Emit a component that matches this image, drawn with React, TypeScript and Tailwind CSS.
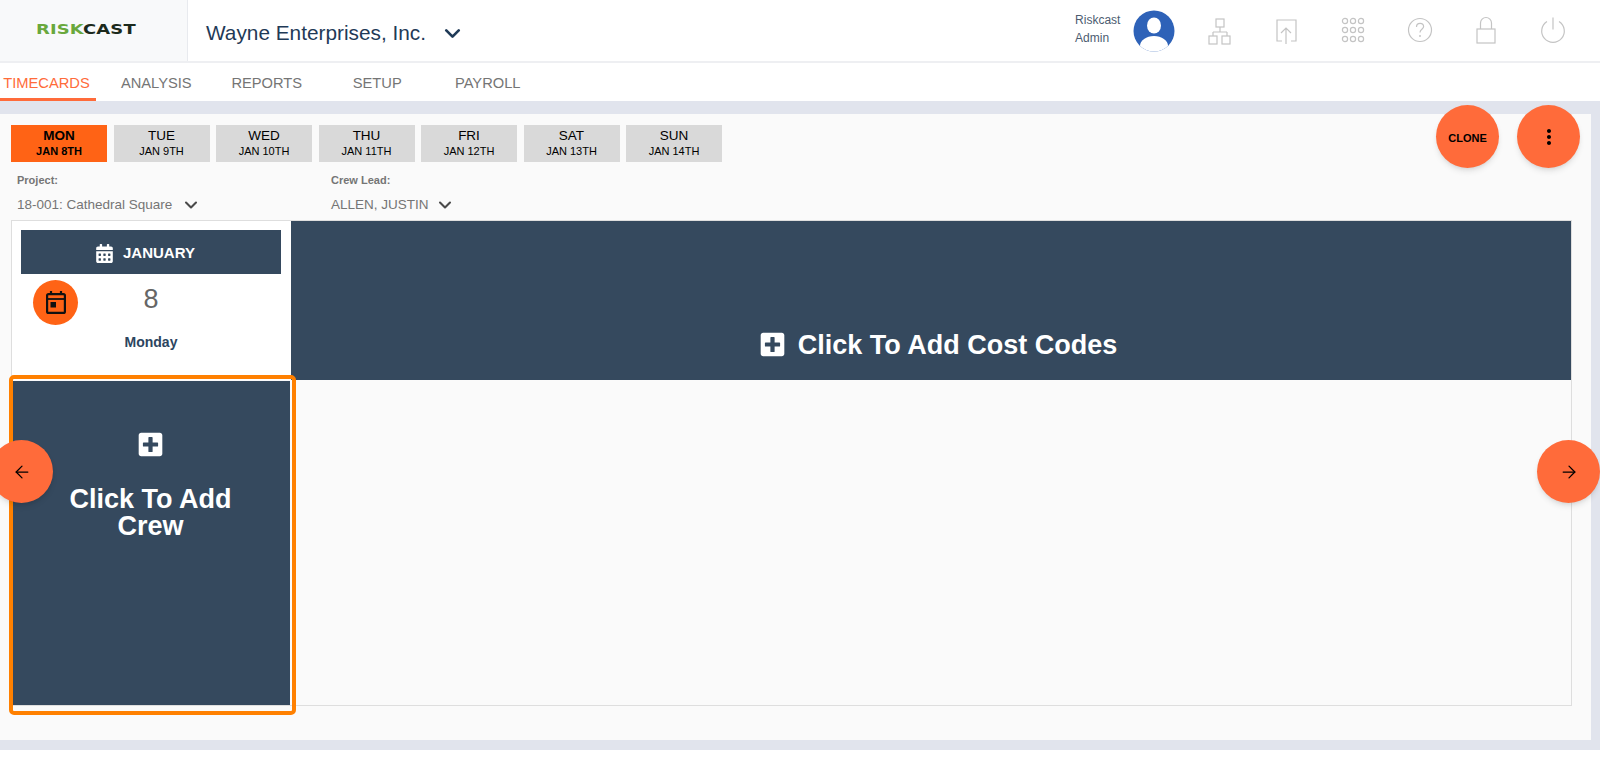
import React from 'react';
import {ArrowLeft, ArrowRight, ChevronDown} from 'lucide-react';
import {FaCalendarAlt, FaPlusSquare} from 'react-icons/fa';
import {MdMoreVert} from 'react-icons/md';

const days = [
    {name: 'MON', date: 'JAN 8TH', active: true},
    {name: 'TUE', date: 'JAN 9TH'},
    {name: 'WED', date: 'JAN 10TH'},
    {name: 'THU', date: 'JAN 11TH'},
    {name: 'FRI', date: 'JAN 12TH'},
    {name: 'SAT', date: 'JAN 13TH'},
    {name: 'SUN', date: 'JAN 14TH'},
];

const tabs = ['TIMECARDS', 'ANALYSIS', 'REPORTS', 'SETUP', 'PAYROLL'];

const HeaderIcon = ({children}: {children: React.ReactNode}) => (
    <div className="flex w-[66.6px] justify-center pb-[2px]">
        <svg width="30" height="30" viewBox="0 0 30 30" fill="none" stroke="#c4c4c4" strokeWidth="1.2">
            {children}
        </svg>
    </div>
);

const Avatar = () => (
    <svg width="42" height="42" viewBox="0 0 42 42">
        <defs>
            <clipPath id="avatar-clip">
                <circle cx="21" cy="21" r="20.5"/>
            </clipPath>
        </defs>
        <circle cx="21" cy="21" r="20.5" fill="#2e62b8"/>
        <ellipse cx="21" cy="15.5" rx="7" ry="8" fill="#fff"/>
        <ellipse cx="21" cy="36" rx="14" ry="10" fill="#fff" clipPath="url(#avatar-clip)"/>
    </svg>
);

const App = () => {
    return (
        <div className="h-[762px] w-[1600px] overflow-hidden bg-white font-['Liberation_Sans',sans-serif]">
            {/* top bar */}
            <header className="flex h-[63px] items-stretch border-b-2 border-[#eeeff2]">
                <div className="flex w-[188px] items-center justify-center border-r border-[#e8eaee] bg-[#f8f9fa] pb-[3px] pr-[15px]">
                    <span className="scale-x-[1.28] font-['DejaVu_Sans',sans-serif] text-[14px] font-bold leading-none tracking-[0.1px]">
                        <span className="text-[#69a83c]">RISK</span>
                        <span className="text-[#1c2a1c]">CAST</span>
                    </span>
                </div>
                <div className="flex items-center pl-[18px] pt-[5px] text-[20.8px] text-[#1f3a57]">
                    <span>Wayne Enterprises, Inc.</span>
                    <ChevronDown className="ml-[14px] text-[#1f3a57]" size={25} strokeWidth={2.6}/>
                </div>
                <div className="ml-auto flex items-center pr-[14px]">
                    <div className="flex flex-col pb-[4px] text-[12px] leading-[18px] text-[#4c5c70]">
                        <span>Riskcast</span>
                        <span>Admin</span>
                    </div>
                    <div className="ml-[13px] mr-[11px]">
                        <Avatar/>
                    </div>
                    <HeaderIcon>
                        <rect x="11" y="4" width="8" height="8"/>
                        <path d="M15 12v5M8 17h14M8 17v4M22 17v4"/>
                        <rect x="4" y="21" width="8" height="8"/>
                        <rect x="17" y="21" width="8" height="8"/>
                    </HeaderIcon>
                    <HeaderIcon>
                        <path d="M11 26H6V5h19v21h-5"/>
                        <path d="M15 29V13M10 18l5-5 5 5"/>
                    </HeaderIcon>
                    <HeaderIcon>
                        {[6, 15, 24].map((cy) =>
                            [7, 15, 23].map((cx) => <circle key={`${cx}-${cy}`} cx={cx} cy={cy} r="2.6"/>)
                        )}
                    </HeaderIcon>
                    <HeaderIcon>
                        <circle cx="15" cy="15" r="11.5"/>
                        <path d="M11.5 12c0-2.2 1.6-3.6 3.6-3.6s3.5 1.3 3.5 3.2c0 2.6-3.6 2.8-3.6 5.8"/>
                        <circle cx="15" cy="21" r="0.4"/>
                    </HeaderIcon>
                    <HeaderIcon>
                        <rect x="6" y="14" width="18" height="14"/>
                        <path d="M9.5 14V8a5.5 5.5 0 0 1 11 0v6"/>
                    </HeaderIcon>
                    <HeaderIcon>
                        <path d="M9 6.5a11.3 11.3 0 1 0 12 0"/>
                        <path d="M15 2.5v12"/>
                    </HeaderIcon>
                </div>
            </header>

            {/* tabs */}
            <nav className="flex h-[38px] text-[14.7px] text-[#757575]">
                {tabs.map((tab, i) => (
                    <div
                        key={tab}
                        className={i === 0
                            ? 'mr-[5px] flex w-[96px] items-center justify-center border-b-[3px] border-[#ff6b3a] pr-[3px] pt-[5px] text-[#ff6b3a]'
                            : 'flex w-[110.5px] items-center justify-center pt-[3px]'}
                    >
                        {tab}
                    </div>
                ))}
            </nav>

            {/* main area */}
            <main className="relative bg-[#e1e4ed] pb-[10px] pr-[9px] pt-[13px]">
                <div className="h-[626px] bg-[#fafafa] pl-[11px] pt-[11px]">
                    <div className="flex gap-[6.5px]">
                        {days.map((day) => (
                            <div
                                key={day.name}
                                className={day.active
                                    ? 'flex h-[37px] w-[96px] flex-col items-center justify-center bg-[#ff6315] pb-[2px] font-bold text-black'
                                    : 'flex h-[37px] w-[96px] flex-col items-center justify-center bg-[#d9d9d9] pb-[2px] text-black'}
                            >
                                <span className="text-[13.5px] leading-[16px]">{day.name}</span>
                                <span className="text-[11px] leading-[14px]">{day.date}</span>
                            </div>
                        ))}
                    </div>

                    <div className="flex pl-[6px] text-[#757575]">
                        <div className="w-[314px]">
                            <div className="mt-[11px] text-[11px] font-bold leading-[14px]">Project:</div>
                            <div className="mt-[8px] flex items-center text-[13.5px] leading-[18px]">
                                18-001: Cathedral Square
                                <ChevronDown className="ml-[9px] text-[#4a4a4a]" size={20} strokeWidth={2.5}/>
                            </div>
                        </div>
                        <div>
                            <div className="mt-[11px] text-[11px] font-bold leading-[14px]">Crew Lead:</div>
                            <div className="mt-[8px] flex items-center text-[13.5px] leading-[18px]">
                                ALLEN, JUSTIN
                                <ChevronDown className="ml-[6px] text-[#4a4a4a]" size={20} strokeWidth={2.5}/>
                            </div>
                        </div>
                    </div>

                    <div className="mt-[5px] grid h-[486px] w-[1561px] grid-cols-[279px_1fr] grid-rows-[159px_1fr] border border-[#dedede]">
                        <div className="flex flex-col items-center bg-white pl-[9px] pr-[10px] pt-[9px]">
                            <div className="flex h-[44px] w-[260px] items-center justify-center gap-[9px] bg-[#35495e] pr-[12px] pt-[2px] text-[15px] font-bold text-white">
                                <FaCalendarAlt size={19}/>
                                JANUARY
                            </div>
                            <div className="mt-[10px] text-center text-[27px] font-light leading-[30px] text-[#666666]">8</div>
                            <div className="mt-[19px] text-[14px] font-bold leading-[18px] text-[#2c4560]">Monday</div>
                        </div>
                        <div className="flex items-end justify-center bg-[#35495e] pb-[20px] pl-[14px] text-[27px] font-bold leading-[30px] text-white">
                            <FaPlusSquare className="mb-[2px] mr-[12px]" size={27}/>
                            Click To Add Cost Codes
                        </div>
                        <div className="mx-[1px] mt-[1px] flex flex-col items-center bg-[#35495e] pr-[2px] pt-[50px] text-center text-[27px] font-bold leading-[27px] text-white">
                            <FaPlusSquare size={27}/>
                            <div className="mt-[28px] w-[200px]">Click To Add Crew</div>
                        </div>
                        <div/>
                    </div>
                </div>

                {/* floating buttons and the highlight round the crew cell */}
                <div className="absolute left-[9px] top-[274px] h-[340px] w-[287px] rounded-[5px] border-[4px] border-[#ff8000]"/>
                <button className="absolute left-[1436px] top-[4px] flex h-[63px] w-[63px] items-center justify-center rounded-full bg-[#ff6b3a] pt-[3px] text-[11px] font-bold text-black shadow-md">
                    CLONE
                </button>
                <button className="absolute left-[1517px] top-[4px] flex h-[63px] w-[63px] items-center justify-center rounded-full bg-[#ff6b3a] text-black shadow-md">
                    <MdMoreVert size={24}/>
                </button>
                <button className="absolute left-[-10px] top-[339px] flex h-[63px] w-[63px] items-center justify-center rounded-full bg-[#ff6b3a] text-black shadow-md">
                    <ArrowLeft size={20} strokeWidth={1.5}/>
                </button>
                <button className="absolute left-[1537px] top-[339px] flex h-[63px] w-[63px] items-center justify-center rounded-full bg-[#ff6b3a] text-black shadow-md">
                    <ArrowRight size={20} strokeWidth={1.5}/>
                </button>
                <div className="absolute left-[33px] top-[179px] flex h-[45px] w-[45px] items-center justify-center rounded-full bg-[#ff6315]">
                    <svg width="20" height="23" viewBox="0 0 20 23" fill="none" stroke="#111" strokeWidth="2.2">
                        <rect x="1.1" y="3.1" width="17.8" height="18.8" rx="1.5"/>
                        <path d="M1 8h18" strokeWidth="1.8"/>
                        <path d="M5 0v4M15 0v4"/>
                        <rect x="4.5" y="11" width="5.5" height="5.5" fill="#111" stroke="none"/>
                    </svg>
                </div>
            </main>
        </div>
    );
};

export default App;
